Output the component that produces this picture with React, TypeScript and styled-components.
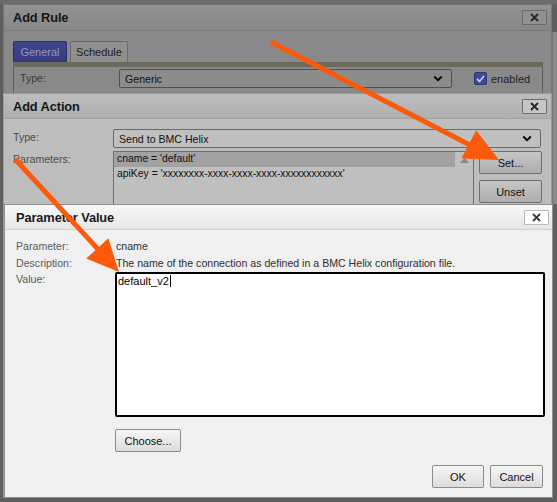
import styled, { createGlobalStyle } from "styled-components"

const Global = createGlobalStyle`
  html, body { margin: 0; padding: 0; background: #606060; }
  body { font-family: "Liberation Sans", Arial, sans-serif; }
`

type Tone = {
  edge: string
  titleTop: string
  titleBottom: string
  titleLine: string
  titleText: string
  body: string
  label: string
  text: string
  field: string
  fieldEdge: string
  btnTop: string
  btnBottom: string
  btnEdge: string
}

const back: Tone = {
  edge: "#767676",
  titleTop: "#929292",
  titleBottom: "#878787",
  titleLine: "#7a7a7a",
  titleText: "#161616",
  body: "#898989",
  label: "#3a3a3a",
  text: "#111",
  field: "#8c8c8c",
  fieldEdge: "#505050",
  btnTop: "#919191",
  btnBottom: "#868686",
  btnEdge: "#6a6a6a",
}

const middle: Tone = {
  edge: "#9a9a9a",
  titleTop: "#bdbdbd",
  titleBottom: "#afafaf",
  titleLine: "#a3a3a3",
  titleText: "#161616",
  body: "#bdbdbd",
  label: "#4c4c4c",
  text: "#111",
  field: "#c0c0c0",
  fieldEdge: "#6a6a6a",
  btnTop: "#c6c6c6",
  btnBottom: "#adadad",
  btnEdge: "#6e6e6e",
}

const front: Tone = {
  edge: "#8f8f8f",
  titleTop: "#f8f8f8",
  titleBottom: "#e6e6e6",
  titleLine: "#d0d0d0",
  titleText: "#1a1a1a",
  body: "#f0f0f0",
  label: "#5a5a5a",
  text: "#333",
  field: "#fff",
  fieldEdge: "#000",
  btnTop: "#f6f6f6",
  btnBottom: "#dcdcdc",
  btnEdge: "#8c8c8c",
}

const Desktop = styled.div`
  position: relative;
  width: 557px;
  height: 502px;
  overflow: hidden;
  background: linear-gradient(#6c6c6c 0 4px, #5f5f5f 4px);
`

/* a sliver of the app window behind the dialogs */
const BehindApp = styled.div`
  position: absolute;
  left: 552px;
  top: 32px;
  width: 8px;
  height: 172px;
  background: #8a8a8a;
  border-left: 1px solid #727272;
`

const Window = styled.section<{ $x: number; $y: number; $w: number; $h: number; $tone: Tone }>`
  position: absolute;
  left: ${p => p.$x}px;
  top: ${p => p.$y}px;
  width: ${p => p.$w}px;
  height: ${p => p.$h}px;
  box-sizing: border-box;
  display: flex;
  flex-direction: column;
  background: ${p => p.$tone.body};
  border: 1px solid ${p => p.$tone.edge};
`

const TitleBar = styled.header<{ $tone: Tone; $h: number; $pad: number; $right: number }>`
  height: ${p => p.$h}px;
  box-sizing: border-box;
  flex: none;
  display: flex;
  align-items: center;
  padding: 0 ${p => p.$right}px 0 ${p => p.$pad}px;
  background: linear-gradient(${p => p.$tone.titleTop}, ${p => p.$tone.titleBottom});
  border-bottom: 1px solid ${p => p.$tone.titleLine};
`

const Title = styled.h1<{ $tone: Tone }>`
  margin: 0;
  font: bold 12.8px "Liberation Sans", Arial, sans-serif;
  color: ${p => p.$tone.titleText};
  letter-spacing: -0.1px;
`

const CloseBox = styled.button<{ $tone: Tone; $white?: boolean }>`
  margin-left: auto;
  width: 25px;
  height: 15px;
  padding: 0;
  display: grid;
  place-items: center;
  box-sizing: border-box;
  background: ${p => (p.$white ? "#fff" : p.$tone.btnTop)};
  border: 1px solid ${p => (p.$white ? "#b8b8b8" : p.$tone.btnEdge)};
  border-radius: 1px;
`

const Close = ({ tone, white }: { tone: Tone; white?: boolean }) => (
  <CloseBox $tone={tone} $white={white}>
    <svg width="9" height="9" viewBox="0 0 9 9">
      <path d="M1 1 L8 8 M8 1 L1 8" stroke={white ? "#3c3c3c" : "#2a2a2a"} strokeWidth="1.9" />
    </svg>
  </CloseBox>
)

const Label = styled.span<{ $tone: Tone }>`
  font-size: 10.6px;
  color: ${p => p.$tone.label};
  line-height: 16px;
`

const SelectBox = styled.div<{ $tone: Tone; $w: number }>`
  width: ${p => p.$w}px;
  height: 19px;
  box-sizing: border-box;
  display: flex;
  align-items: center;
  padding: 0 8px 0 5px;
  font-size: 10.6px;
  color: ${p => p.$tone.text};
  background: ${p => p.$tone.field};
  border: 1px solid ${p => p.$tone.fieldEdge};
  border-radius: 2px;

  svg {
    margin-left: auto;
  }
`

const Select = ({ tone, w, value }: { tone: Tone; w: number; value: string }) => (
  <SelectBox $tone={tone} $w={w}>
    {value}
    <svg width="10" height="7" viewBox="0 0 10 7">
      <path d="M1.2 1.5 L5 5.2 L8.8 1.5" fill="none" stroke="#000" strokeWidth="2" />
    </svg>
  </SelectBox>
)

const Button = styled.button<{ $tone: Tone; $w: number }>`
  width: ${p => p.$w}px;
  height: 23px;
  padding: 0;
  box-sizing: border-box;
  font: 11px "Liberation Sans", Arial, sans-serif;
  color: #111;
  background: linear-gradient(${p => p.$tone.btnTop}, ${p => p.$tone.btnBottom});
  border: 1px solid ${p => p.$tone.btnEdge};
  border-radius: 2px;
`

/* ---- Add Rule (furthest back) ---- */

const RuleBody = styled.div`
  padding: 10px 8px 0 9px;
  display: flex;
  flex-direction: column;
`

const Tabs = styled.div`
  display: flex;
  gap: 3px;
  height: 21px;
`

const Tab = styled.div<{ $active?: boolean; $w: number }>`
  width: ${p => p.$w}px;
  box-sizing: border-box;
  display: grid;
  place-items: center;
  font-size: 11px;
  border: 1px solid ${p => (p.$active ? "#2c2f6b" : "#6c6c6c")};
  border-bottom: none;
  border-radius: 2px 2px 0 0;
  color: ${p => (p.$active ? "#9197c6" : "#1c1c1c")};
  background: ${p => (p.$active ? "linear-gradient(#42468f, #363a82)" : "#8f8f8f")};
`

const TabStrip = styled.div`
  height: 5px;
  background: #6b6a5c;
`

const RulePanel = styled.div`
  display: flex;
  align-items: center;
  padding: 2px 6px 12px;
  border: 1px solid #5c5c5c;
  border-top: none;
`

const RuleLabel = styled(Label)`
  width: 99px;
  align-self: flex-start;
  margin-top: 1px;
`

const Check = styled.span`
  margin-left: 22px;
  width: 13px;
  height: 13px;
  box-sizing: border-box;
  display: grid;
  place-items: center;
  background: #3a4a9b;
  border: 1px solid #2c3778;
  border-radius: 2px;
`

const CheckText = styled.span`
  margin-left: 4px;
  font-size: 11px;
  color: #222;
`

/* ---- Add Action ---- */

const ActionBody = styled.div`
  padding: 10px 10px 0 9px;
  display: grid;
  grid-template-columns: 100px auto;
  row-gap: 3px;
  align-items: start;
`

const ParamsRow = styled.div`
  display: flex;
  gap: 5px;
`

const ListBox = styled.div`
  width: 361px;
  height: 80px;
  box-sizing: border-box;
  display: flex;
  background: #bfbfbf;
  border: 1px solid #6f6f6f;
`

const ListRows = styled.div`
  flex: 1;
  display: flex;
  flex-direction: column;
`

const ListRow = styled.div<{ $selected?: boolean }>`
  height: 14.5px;
  line-height: 14px;
  padding-left: 3px;
  font-size: 10.4px;
  color: #111;
  white-space: nowrap;
  background: ${p => (p.$selected ? "#a2a2a2" : "transparent")};
`

const ScrollTrack = styled.div`
  width: 18px;
  display: flex;
  justify-content: center;
  padding-top: 6px;
  box-sizing: border-box;
`

const ButtonColumn = styled.div`
  display: flex;
  flex-direction: column;
  gap: 6px;
`

/* ---- Parameter Value (front) ---- */

const ParamBody = styled.div`
  flex: 1;
  display: flex;
  flex-direction: column;
  padding: 8px 8px 9px 11px;
`

const Fields = styled.div`
  display: grid;
  grid-template-columns: 100px auto;
  grid-auto-rows: minmax(16.5px, auto);
  align-items: start;
`

const FieldText = styled.span`
  font-size: 10.6px;
  line-height: 16.5px;
  color: #2e2e2e;
  white-space: nowrap;
`

const ValueBox = styled.div`
  margin: 1px 0 0 -1px;
  width: 430px;
  height: 145px;
  box-sizing: border-box;
  padding: 1px 1px;
  background: #fff;
  border: 2px solid #000;
  border-radius: 2px;
  font-size: 11px;
  line-height: 13px;
  color: #000;
`

const Caret = styled.span`
  display: inline-block;
  width: 1px;
  height: 12px;
  margin-left: 1px;
  vertical-align: -2px;
  background: #000;
`

const ChooseRow = styled.div`
  margin: 12px 0 0 99px;
`

const Footer = styled.div`
  margin-top: auto;
  display: flex;
  justify-content: flex-end;
  gap: 6px;
  padding-right: 1px;
`

/* ---- orange call-out arrows drawn over the screenshot ---- */

const Overlay = styled.svg`
  position: absolute;
  left: 0;
  top: 0;
  width: 557px;
  height: 502px;
  pointer-events: none;
`

function Arrow({ from, tip, len = 32, half = 15 }: { from: [number, number]; tip: [number, number]; len?: number; half?: number }) {
  const dx = tip[0] - from[0],
    dy = tip[1] - from[1],
    d = Math.hypot(dx, dy),
    ux = dx / d,
    uy = dy / d,
    bx = tip[0] - ux * len,
    by = tip[1] - uy * len,
    px = -uy * half,
    py = ux * half
  return (
    <g fill="#fb5a0c" stroke="#fb5a0c">
      <line x1={from[0]} y1={from[1]} x2={bx + ux * 4} y2={by + uy * 4} strokeWidth="5" />
      <polygon
        stroke="none"
        points={`${tip[0]},${tip[1]} ${bx + px},${by + py} ${bx - px},${by - py}`}
      />
    </g>
  )
}

export default function App() {
  return (
    <>
      <Global />
      <Desktop>
        <BehindApp />

        <Window $x={3} $y={4} $w={549} $h={494} $tone={back}>
          <TitleBar $tone={back} $h={26} $pad={9} $right={4}>
            <Title $tone={back}>Add Rule</Title>
            <Close tone={back} />
          </TitleBar>
          <RuleBody>
            <Tabs>
              <Tab $active $w={54}>General</Tab>
              <Tab $w={58}>Schedule</Tab>
            </Tabs>
            <TabStrip />
            <RulePanel>
              <RuleLabel $tone={back}>Type:</RuleLabel>
              <Select tone={back} w={333} value="Generic" />
              <Check>
                <svg width="9" height="8" viewBox="0 0 9 8">
                  <path d="M1 4 L3.5 6.5 L8 1" fill="none" stroke="#c2c8e2" strokeWidth="1.8" />
                </svg>
              </Check>
              <CheckText>enabled</CheckText>
            </RulePanel>
          </RuleBody>
        </Window>

        <Window $x={3} $y={93} $w={549} $h={405} $tone={middle}>
          <TitleBar $tone={middle} $h={25} $pad={9} $right={4}>
            <Title $tone={middle}>Add Action</Title>
            <Close tone={middle} />
          </TitleBar>
          <ActionBody>
            <Label $tone={middle}>Type:</Label>
            <Select tone={middle} w={428} value="Send to BMC Helix" />
            <Label $tone={middle}>Parameters:</Label>
            <ParamsRow>
              <ListBox>
                <ListRows>
                  <ListRow $selected>cname = 'default'</ListRow>
                  <ListRow>apiKey = 'xxxxxxxx-xxxx-xxxx-xxxx-xxxxxxxxxxxx'</ListRow>
                </ListRows>
                <ScrollTrack>
                  <svg width="9" height="5" viewBox="0 0 9 5">
                    <path d="M0 5 L4.5 0 L9 5 Z" fill="#8a8a8a" />
                  </svg>
                </ScrollTrack>
              </ListBox>
              <ButtonColumn>
                <Button $tone={middle} $w={63}>Set...</Button>
                <Button $tone={middle} $w={63}>Unset</Button>
              </ButtonColumn>
            </ParamsRow>
          </ActionBody>
        </Window>

        <Window $x={4} $y={204} $w={549} $h={294} $tone={front}>
          <TitleBar $tone={front} $h={25} $pad={11} $right={3}>
            <Title $tone={front}>Parameter Value</Title>
            <Close tone={front} white />
          </TitleBar>
          <ParamBody>
            <Fields>
              <Label $tone={front}>Parameter:</Label>
              <FieldText>cname</FieldText>
              <Label $tone={front}>Description:</Label>
              <FieldText>The name of the connection as defined in a BMC Helix configuration file.</FieldText>
              <Label $tone={front}>Value:</Label>
              <ValueBox>
                default_v2
                <Caret />
              </ValueBox>
            </Fields>
            <ChooseRow>
              <Button $tone={front} $w={66}>Choose...</Button>
            </ChooseRow>
            <Footer>
              <Button $tone={front} $w={52}>OK</Button>
              <Button $tone={front} $w={53}>Cancel</Button>
            </Footer>
          </ParamBody>
        </Window>

        <Overlay viewBox="0 0 557 502">
          <Arrow from={[271, 42]} tip={[499, 160]} len={34} half={16} />
          <Arrow from={[15, 159]} tip={[119, 272]} len={32} half={15} />
        </Overlay>
      </Desktop>
    </>
  )
}
